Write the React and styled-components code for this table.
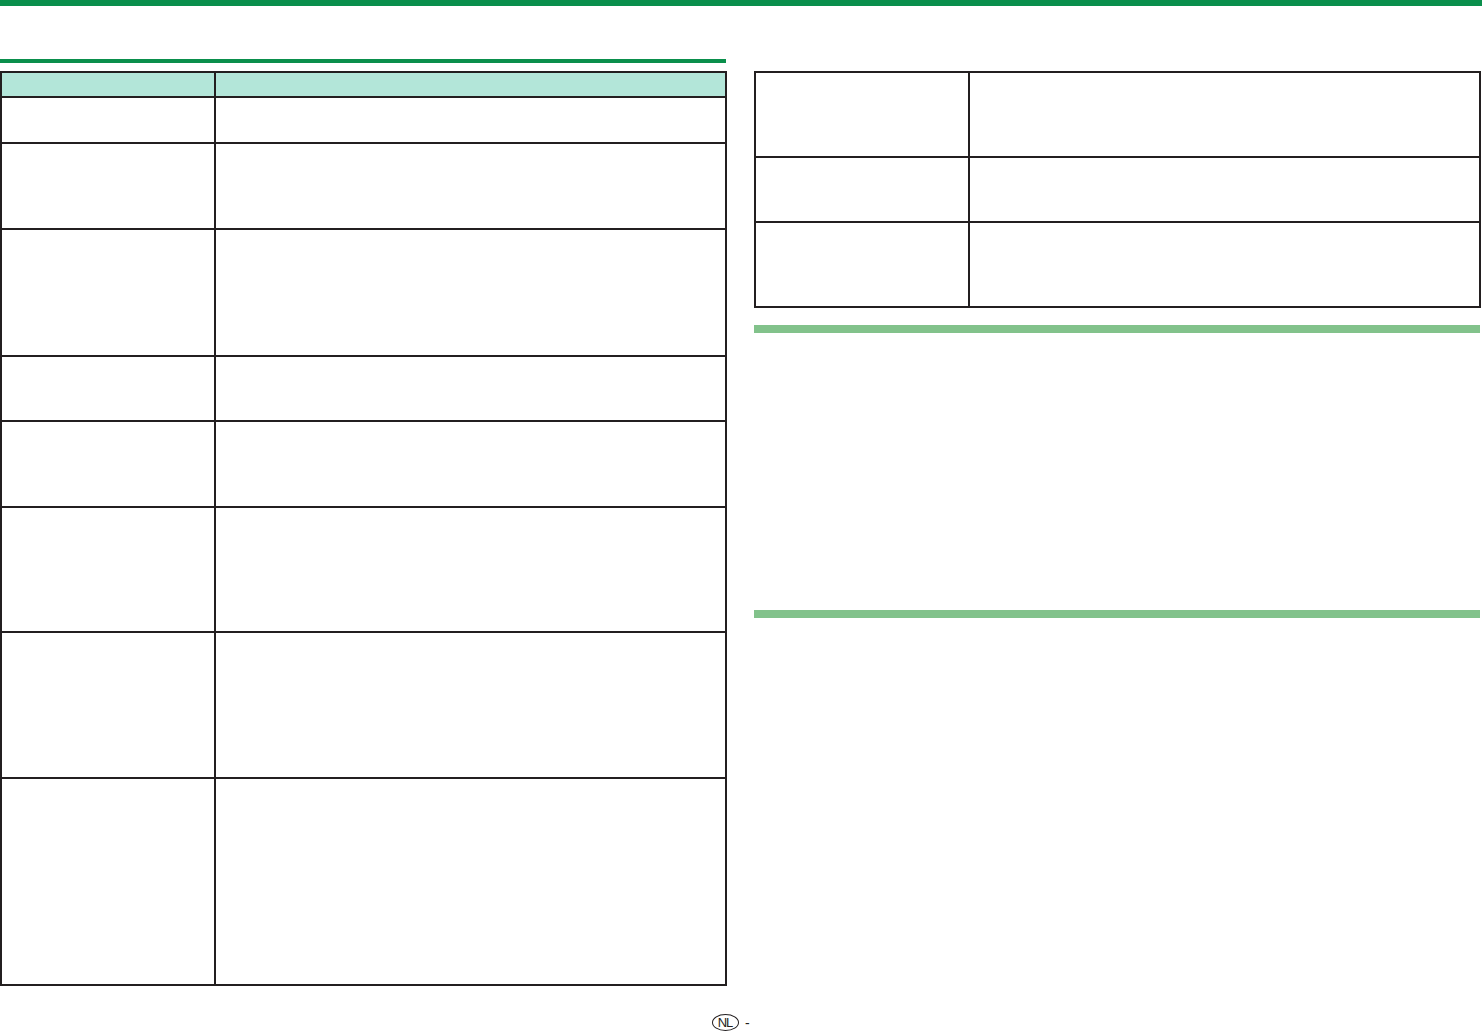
import React from 'react';
import styled, { createGlobalStyle } from 'styled-components';

const GlobalStyle = createGlobalStyle`
	html, body {
		margin: 0;
		padding: 0;
		background: #ffffff;
		font-family: "Liberation Sans", Arial, sans-serif;
	}
`;

const Page = styled.div`
	width: 1482px;
	height: 1034px;
	display: flex;
	flex-direction: column;
	overflow: hidden;
`;

const TopBar = styled.div`
	height: 6px;
	background-color: #0a8f4c;
`;

const Columns = styled.div`
	display: grid;
	grid-template-columns: 727px 727px;
	column-gap: 27px;
`;

const Column = styled.div`
	display: flex;
	flex-direction: column;
	padding-top: ${p => p.$top}px;
`;

const SectionRule = styled.div`
	width: 726px;
	height: 4px;
	margin-bottom: 8px;
	background-color: #0a8f4c;
`;

const Table = styled.div`
	display: flex;
	flex-direction: column;
	border: 2px solid #231f20;
`;

const Row = styled.div`
	display: grid;
	grid-template-columns: ${p => p.$first}px 1fr;
	height: ${p => p.$h}px;
	box-sizing: border-box;
	background-color: ${p => (p.$head ? '#b3e6d9' : 'transparent')};
	border-bottom: ${p => (p.$last ? 'none' : '2px solid #231f20')};
`;

const Cell = styled.div`
	border-right: 2px solid #231f20;
`;

const LightBar = styled.div`
	height: 8px;
	background-color: #82c28b;
	margin-top: ${p => p.$top}px;
	margin-right: 1px;
`;

const Footer = styled.div`
	display: flex;
	align-items: center;
	gap: 6px;
	margin-top: 28px;
	padding-left: 712px;
	font-size: 14px;
	color: #231f20;
`;

const Badge = styled.span`
	display: inline-flex;
	align-items: center;
	justify-content: center;
	width: 24px;
	height: 15px;
	border: 1px solid #231f20;
	border-radius: 50%;
	font-size: 13px;
	letter-spacing: -1px;
	padding-right: 1px;
	line-height: 1;
`;

const leftRows = [25, 46, 86, 127, 65, 86, 125, 146, 205];
const rightRows = [85, 65, 83];

const App = () => (
	<Page>
		<GlobalStyle />
		<TopBar />
		<Columns>
			<Column $top={53}>
				<SectionRule />
				<Table>
					{leftRows.map((h, i) => (
						<Row key={i} $first={214} $h={h} $head={i === 0} $last={i === leftRows.length - 1}>
							<Cell />
							<div />
						</Row>
					))}
				</Table>
			</Column>
			<Column $top={65}>
				<Table>
					{rightRows.map((h, i) => (
						<Row key={i} $first={214} $h={h} $last={i === rightRows.length - 1}>
							<Cell />
							<div />
						</Row>
					))}
				</Table>
				<LightBar $top={17} />
				<LightBar $top={277} />
			</Column>
		</Columns>
		<Footer>
			<Badge>NL</Badge>
			<span>-</span>
		</Footer>
	</Page>
);

export default App;
